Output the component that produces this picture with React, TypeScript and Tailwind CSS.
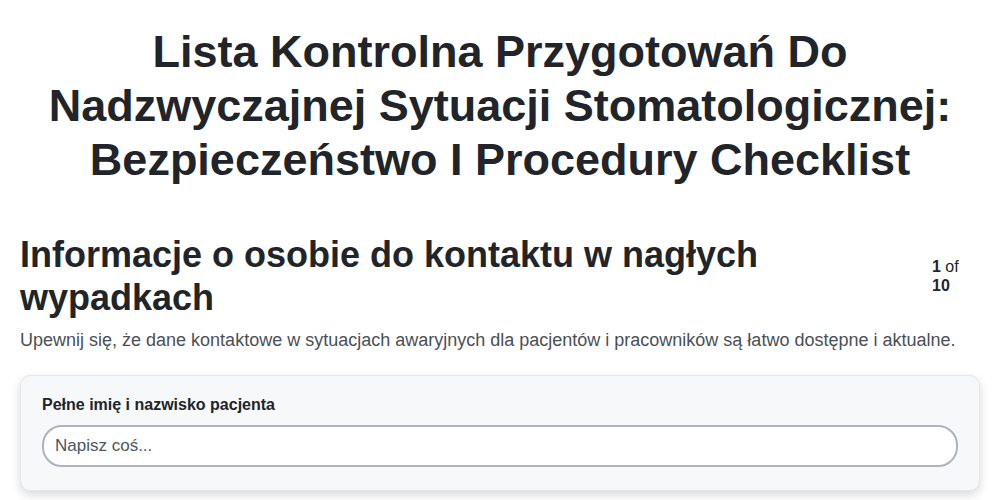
export default function App() {
  return (
    <div className="min-h-screen bg-white text-[#212529] font-['Liberation_Sans',Arial,sans-serif]">
      <div className="px-5 pt-[25px]">
        <h1 className="text-center text-[45px] font-bold leading-[54px] px-6">
          Lista Kontrolna Przygotowań Do Nadzwyczajnej Sytuacji Stomatologicznej: Bezpieczeństwo I Procedury Checklist
        </h1>

        <div className="mt-[46px] flex items-center">
          <h2 className="flex-1 text-[36px] font-bold leading-[43px] pr-[150px]">
            Informacje o osobie do kontaktu w nagłych wypadkach
          </h2>
          <div className="w-[32px] mr-[16px] shrink-0 text-[16px] leading-[19px]">
            <span className="font-bold">1</span> of <span className="font-bold">10</span>
          </div>
        </div>

        <p className="mt-[8px] text-[18px] leading-[27px] text-[#495057]">
          Upewnij się, że dane kontaktowe w sytuacjach awaryjnych dla pacjentów i pracowników są łatwo dostępne i aktualne.
        </p>

        <div className="mt-[21px] rounded-[10px] border border-[#e4e6ea] bg-[#f7f8fa] px-[21px] pt-[19px] pb-[23px] shadow-[0_4px_10px_rgba(0,0,0,0.15)]">
          <label className="block text-[16px] font-bold leading-5">Pełne imię i nazwisko pacjenta</label>
          <input
            type="text"
            placeholder="Napisz coś..."
            className="mt-[10px] block h-[42px] w-full rounded-[20px] border-2 border-[#aeb4bb] bg-white px-[11px] text-[17px] text-[#212529] placeholder:text-[#4b5563] outline-none"
          />
        </div>
      </div>
    </div>
  )
}
